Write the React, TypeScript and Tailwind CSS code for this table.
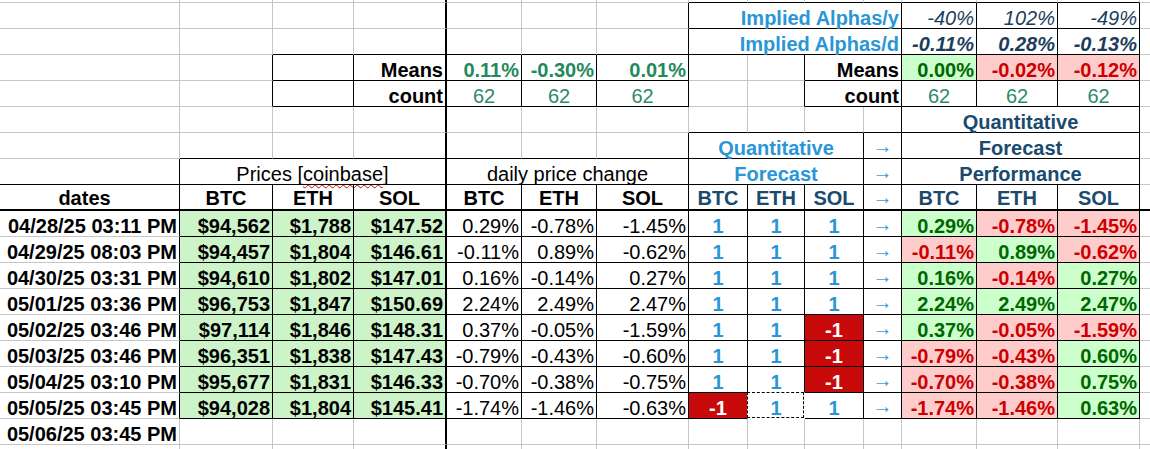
import React from "react";

type Cell = {
  s?: number;
  t?: string;
  k?: string;
  al?: "l" | "c" | "r";
  box?: boolean;
  dash?: boolean;
  wavy?: boolean;
};

const BOLD = "font-bold";
const LB = "font-bold text-[#2a96d6]";
const DB = "font-bold text-[#1a4a6e]";
const AY = "italic text-[#1c3d5c]";
const AD = "italic font-bold text-[#1c3d5c]";
const TEAL_B = "font-bold text-[#1f8a5a]";
const TEAL = "text-[#2e8a6a]";
const GOOD = "font-bold text-[#006600] bg-[#ccffcc]";
const BAD = "font-bold text-[#cc0000] bg-[#ffcccc]";
const PRICE = "font-bold bg-[#cdf3c9]";
const NEG = "font-bold text-white bg-[#c80a0a]";
const ARROW = "text-[#3a9cd8] pb-[2px]";

const R_CLS = {
  gray: "border-r border-r-[#c6c6c6]",
  black: "border-r border-r-black",
  thick: "border-r-2 border-r-black",
  white: "border-r border-r-white",
};
const B_CLS = {
  gray: "border-b border-b-[#c6c6c6]",
  black: "border-b border-b-black",
  thick: "border-b-2 border-b-black",
  white: "border-b border-b-white",
};
const SPAN: Record<number, string> = { 1: "", 2: "col-span-2", 3: "col-span-3", 4: "col-span-4" };
const ALIGN = { l: "justify-start pl-[2px]", c: "justify-center", r: "justify-end pr-[2px]" };

const e = (n: number): Cell[] => Array.from({ length: n }, () => ({}));
const perf = (v: string): Cell => ({ t: v, k: v.startsWith("-") ? BAD : GOOD, al: "r", box: true });
const fc = (v: number): Cell =>
  v === 1 ? { t: "1", k: LB, al: "c", box: true } : { t: "-1", k: NEG, al: "c", box: true };
const arrow = (): Cell => ({ t: "→", k: ARROW, al: "c", box: true });
const hdr = (t: string, k: string): Cell => ({ t, k, al: "c", box: true });

const data: [string, string, string, string, string, string, string, number, number, number, string, string, string][] = [
  ["04/28/25 03:11 PM", "$94,562", "$1,788", "$147.52", "0.29%", "-0.78%", "-1.45%", 1, 1, 1, "0.29%", "-0.78%", "-1.45%"],
  ["04/29/25 08:03 PM", "$94,457", "$1,804", "$146.61", "-0.11%", "0.89%", "-0.62%", 1, 1, 1, "-0.11%", "0.89%", "-0.62%"],
  ["04/30/25 03:31 PM", "$94,610", "$1,802", "$147.01", "0.16%", "-0.14%", "0.27%", 1, 1, 1, "0.16%", "-0.14%", "0.27%"],
  ["05/01/25 03:36 PM", "$96,753", "$1,847", "$150.69", "2.24%", "2.49%", "2.47%", 1, 1, 1, "2.24%", "2.49%", "2.47%"],
  ["05/02/25 03:46 PM", "$97,114", "$1,846", "$148.31", "0.37%", "-0.05%", "-1.59%", 1, 1, -1, "0.37%", "-0.05%", "-1.59%"],
  ["05/03/25 03:46 PM", "$96,351", "$1,838", "$147.43", "-0.79%", "-0.43%", "-0.60%", 1, 1, -1, "-0.79%", "-0.43%", "0.60%"],
  ["05/04/25 03:10 PM", "$95,677", "$1,831", "$146.33", "-0.70%", "-0.38%", "-0.75%", 1, 1, -1, "-0.70%", "-0.38%", "0.75%"],
  ["05/05/25 03:45 PM", "$94,028", "$1,804", "$145.41", "-1.74%", "-1.46%", "-0.63%", -1, 1, 1, "-1.74%", "-1.46%", "0.63%"],
];

const rows: Cell[][] = [
  e(15),
  [
    ...e(7),
    { s: 4, t: "Implied Alphas/y", k: LB, al: "r", box: true },
    { t: "-40%", k: AY, al: "r", box: true },
    { t: "102%", k: AY, al: "r", box: true },
    { t: "-49%", k: AY, al: "r", box: true },
    {},
  ],
  [
    ...e(7),
    { s: 4, t: "Implied Alphas/d", k: LB, al: "r", box: true },
    { t: "-0.11%", k: AD, al: "r", box: true },
    { t: "0.28%", k: AD, al: "r", box: true },
    { t: "-0.13%", k: AD, al: "r", box: true },
    {},
  ],
  [
    {},
    {},
    { box: true },
    { t: "Means", k: BOLD, al: "r", box: true },
    { t: "0.11%", k: TEAL_B, al: "r", box: true },
    { t: "-0.30%", k: TEAL_B, al: "r", box: true },
    { t: "0.01%", k: TEAL_B, al: "r", box: true },
    {},
    {},
    { s: 2, t: "Means", k: BOLD, al: "r", box: true },
    perf("0.00%"),
    perf("-0.02%"),
    perf("-0.12%"),
    {},
  ],
  [
    {},
    {},
    { box: true },
    { t: "count", k: BOLD, al: "r", box: true },
    hdr("62", TEAL),
    hdr("62", TEAL),
    hdr("62", TEAL),
    {},
    {},
    { s: 2, t: "count", k: BOLD, al: "r", box: true },
    hdr("62", TEAL),
    hdr("62", TEAL),
    hdr("62", TEAL),
    {},
  ],
  [...e(11), { s: 3, t: "Quantitative", k: DB, al: "c", box: true }, {}],
  [
    ...e(7),
    { s: 3, t: "Quantitative", k: LB, al: "c", box: true },
    arrow(),
    { s: 3, t: "Forecast", k: DB, al: "c", box: true },
    {},
  ],
  [
    {},
    { s: 3, t: "Prices [coinbase]", k: "", al: "c", box: true, wavy: true },
    { s: 3, t: "daily price change", k: "", al: "c", box: true },
    { s: 3, t: "Forecast", k: LB, al: "c", box: true },
    arrow(),
    { s: 3, t: "Performance", k: DB, al: "c", box: true },
    {},
  ],
  [
    hdr("dates", BOLD),
    hdr("BTC", BOLD),
    hdr("ETH", BOLD),
    hdr("SOL", BOLD),
    hdr("BTC", BOLD),
    hdr("ETH", BOLD),
    hdr("SOL", BOLD),
    hdr("BTC", DB),
    hdr("ETH", DB),
    hdr("SOL", DB),
    arrow(),
    hdr("BTC", DB),
    hdr("ETH", DB),
    hdr("SOL", DB),
    {},
  ],
  ...data.map((d, i): Cell[] => [
    { t: d[0], k: BOLD, al: "r" },
    { t: d[1], k: PRICE, al: "r", box: true },
    { t: d[2], k: PRICE, al: "r", box: true },
    { t: d[3], k: PRICE, al: "r", box: true },
    { t: d[4], al: "r", box: true },
    { t: d[5], al: "r", box: true },
    { t: d[6], al: "r", box: true },
    fc(d[7]),
    i === 7 ? { ...fc(d[8]), dash: true } : fc(d[8]),
    fc(d[9]),
    arrow(),
    perf(d[10]),
    perf(d[11]),
    perf(d[12]),
    {},
  ]),
  [{ t: "05/06/25 03:45 PM", k: BOLD, al: "r" }, ...e(14)],
  e(15),
];

// column occupancy so borders can look at their neighbours
const occ: (Cell | undefined)[][] = rows.map((row) => {
  const out: Cell[] = [];
  row.forEach((cell) => {
    for (let j = 0; j < (cell.s ?? 1); j++) out.push(cell);
  });
  return out;
});

function rightCls(r: number, end: number, cell: Cell) {
  if (end === 3) return R_CLS.thick;
  const n = occ[r][end + 1];
  if (cell.dash || n?.dash) return R_CLS.white;
  if (cell.box || n?.box) return R_CLS.black;
  return R_CLS.gray;
}

function bottomCls(r: number, start: number, end: number, cell: Cell) {
  if (r === 8) return B_CLS.thick;
  const below = (occ[r + 1] ?? []).slice(start, end + 1);
  if (cell.dash || below.some((b) => b?.dash)) return B_CLS.white;
  if (cell.box || below.some((b) => b?.box)) return B_CLS.black;
  return B_CLS.gray;
}

function Text({ cell }: { cell: Cell }) {
  if (cell.wavy) {
    return (
      <span>
        Prices [
        <span className="underline decoration-wavy decoration-[#e00000] decoration-1 underline-offset-[3px]">
          coinbase
        </span>
        ]
      </span>
    );
  }
  return <span>{cell.t}</span>;
}

export default function App() {
  return (
    <div className="w-[1150px] h-[449px] overflow-hidden bg-white font-['Liberation_Sans',Arial,sans-serif] text-[20px] text-black">
      <div className="ml-[-10px] grid grid-cols-[190px_93px_81px_93px_75px_75px_92px_59px_57px_59px_38px_75px_81px_82px_40px] grid-rows-[3px_repeat(18,26px)]">
        {rows.map((row, r) => {
          let c = 0;
          return row.map((cell, i) => {
            const start = c;
            const span = cell.s ?? 1;
            c += span;
            const end = start + span - 1;
            const pad = r === 8 && cell.k !== ARROW ? "pb-[1px]" : "";
            return (
              <div
                key={`${r}-${i}`}
                className={`flex items-end whitespace-nowrap leading-[20px] ${SPAN[span]} ${ALIGN[cell.al ?? "l"]} ${rightCls(
                  r,
                  end,
                  cell
                )} ${bottomCls(r, start, end, cell)} ${pad} ${cell.dash ? "relative" : ""} ${cell.k ?? ""}`}
              >
                {cell.t !== undefined && <Text cell={cell} />}
                {cell.dash && (
                  <div className="pointer-events-none absolute -left-px -top-px right-0 bottom-0 border border-dashed border-black" />
                )}
              </div>
            );
          });
        })}
      </div>
    </div>
  );
}
